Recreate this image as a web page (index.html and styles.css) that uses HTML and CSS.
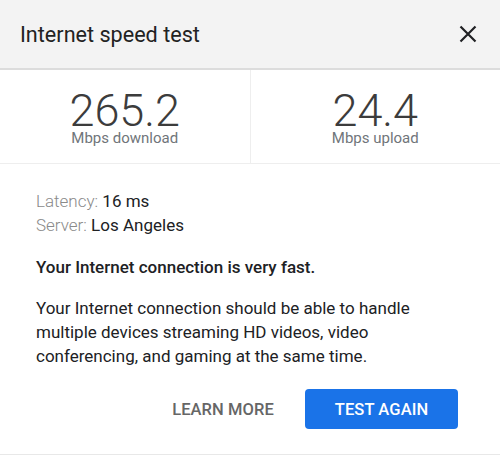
FILE: index.html
```html
<!DOCTYPE html>
<html>
<head>
<meta charset="utf-8">
<link rel="stylesheet" href="styles.css">
</head>
<body>
<div class="card">
  <header class="head">
    <h1 class="title">Internet speed test</h1>
    <svg class="close" width="18" height="18" viewBox="0 0 18 18"><path d="M1.5 1.5L16.5 16.5M16.5 1.5L1.5 16.5" stroke="#202124" stroke-width="2.2" fill="none"/></svg>
  </header>
  <section class="stats">
    <div class="stat">
      <div class="num">265.2</div>
      <div class="unit">Mbps download</div>
    </div>
    <div class="stat">
      <div class="num">24.4</div>
      <div class="unit">Mbps upload</div>
    </div>
  </section>
  <section class="body">
    <div class="meta">
      <div><span class="lbl">Latency:</span> 16 ms</div>
      <div><span class="lbl">Server:</span> Los Angeles</div>
    </div>
    <p class="verdict">Your Internet connection is very fast.</p>
    <p class="desc">Your Internet connection should be able to handle multiple devices streaming HD videos, video conferencing, and gaming at the same time.</p>
    <div class="actions">
      <button class="btn text">LEARN MORE</button>
      <button class="btn primary">TEST AGAIN</button>
    </div>
  </section>
</div>
</body>
</html>
```
FILE: styles.css
```css
html, body { margin: 0; padding: 0; background: #fff; }
body { font-family: Roboto, "Noto Sans", sans-serif; color: #202124; }
.card { width: 500px; height: 455px; border-bottom: 1px solid #e8e8e8; box-sizing: border-box; }
.head {
  height: 68px; background: #f3f3f3; border-bottom: 2px solid #dcdcdc;
  display: flex; align-items: center; justify-content: space-between;
  padding: 0 23px 0 20px; box-sizing: content-box;
}
.title { margin: 0; font-size: 21.6px; font-weight: 400; color: #222; letter-spacing: 0; }
.close { display: block; }
.stats { display: flex; height: 93px; border-bottom: 1px solid #eeeeee; }
.stat { flex: 1; display: flex; flex-direction: column; align-items: center; padding-top: 22px; box-sizing: border-box; }
.stat + .stat { border-left: 1px solid #eeeeee; }
.num { font-size: 45px; font-weight: 300; color: #3c3c3c; line-height: 37px; }
.unit { font-size: 15px; color: #70757a; line-height: 19px; }
.body { padding: 25px 36px 0 36px; font-size: 17px; }
.meta { line-height: 24px; color: #202124; }
.lbl { color: #8a8a8a; font-weight: 300; }
.verdict { margin: 18px 0 0; font-weight: 500; line-height: 24px; }
.desc { margin: 17px 0 0; line-height: 24px; color: #202124; }
.actions { display: flex; justify-content: flex-end; align-items: center; gap: 31px; margin-top: 21px; padding-right: 6px; }
.btn { font-family: Roboto, sans-serif; font-size: 16.5px; font-weight: 500; border: none; cursor: pointer; letter-spacing: 0.1px; }
.text { background: none; color: #666; padding: 0; }
.primary { background: #1a73e8; color: #fff; width: 153px; height: 40px; border-radius: 4px; }
```
